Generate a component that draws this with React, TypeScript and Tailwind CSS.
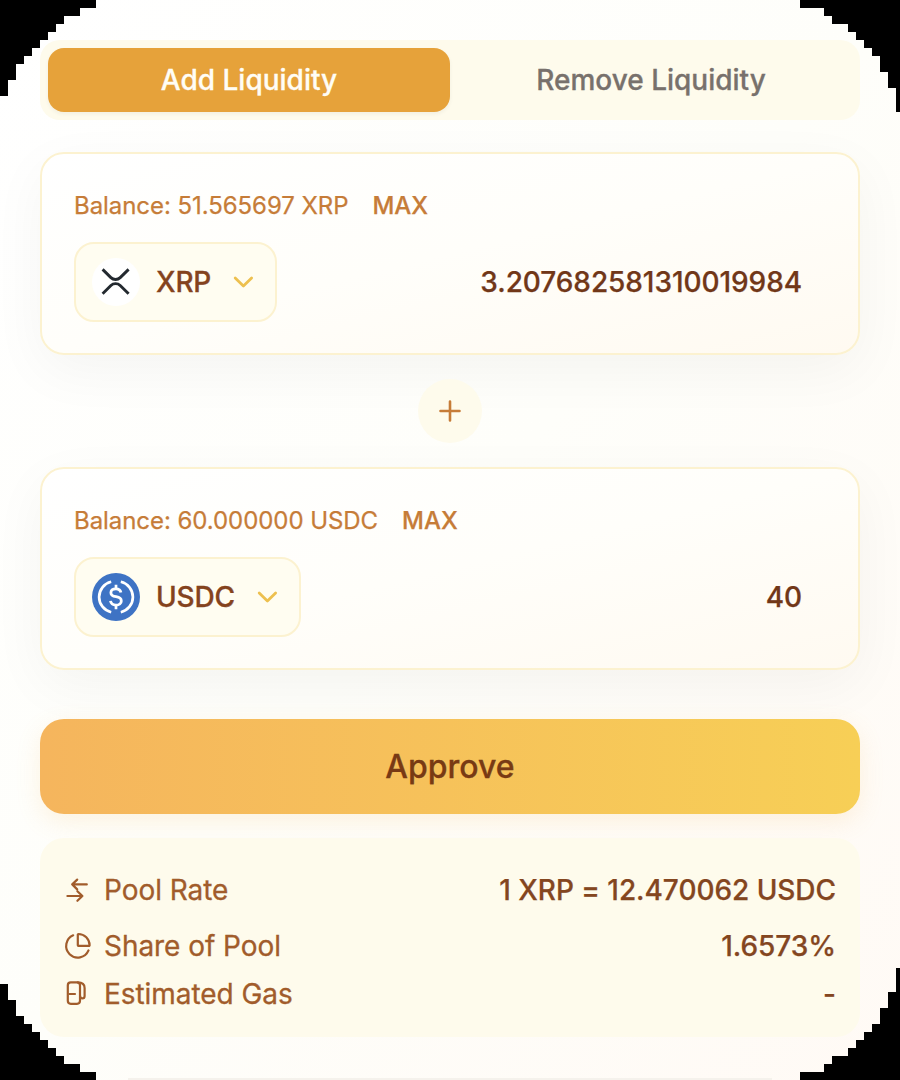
import type { ReactNode } from "react";

function Chevron() {
  return (
    <svg className="h-6 w-6 shrink-0" viewBox="0 0 24 24" fill="none" stroke="#edc04f" strokeWidth="2.8" strokeLinecap="round" strokeLinejoin="round">
      <path d="M4.200 8l8.200 8 8.200-8" />
    </svg>
  );
}

function XrpLogo() {
  return (
    <svg className="h-12 w-12 shrink-0" viewBox="0 0 48 48">
      <circle cx="24" cy="24" r="24" fill="#ffffff" />
      <g fill="none" stroke="#23292f" strokeWidth="2.900">
        <path d="M10.600 11.400l8.300 8.200c2.600 2.500 6.700 2.500 9.300 0l8.400-8.200" />
        <path d="M10.600 35.700l8.300-8.200c2.600-2.500 6.700-2.500 9.300 0l8.400 8.200" />
      </g>
    </svg>
  );
}

function UsdcLogo() {
  return (
    <svg className="h-12 w-12 shrink-0" viewBox="0 0 48 48">
      <circle cx="24" cy="24" r="24" fill="#3e73c4" />
      <g fill="none" stroke="#ffffff" strokeWidth="2.700">
        <path d="M19.200 8.800a15.600 15.600 0 0 0 0 30.400M28.800 8.800a15.600 15.600 0 0 1 0 30.400" />
        <path d="M28.900 19.600c-.4-2.400-2-3.700-4.900-3.700-3.200 0-5.100 1.600-5.100 3.800 0 2.400 1.600 3.400 5.200 4 3.500.6 5.200 1.700 5.200 4.200 0 2.500-2.100 4.200-5.300 4.200-3.100 0-5.100-1.500-5.500-4.200" strokeWidth="2.800" />
        <path d="M24 11.800v4M24 32v4.200" />
      </g>
    </svg>
  );
}

function SwapIcon() {
  return (
    <svg className="h-7 w-7 shrink-0" viewBox="0 0 28 28" fill="none" stroke="#a15c2b" strokeWidth="2.200" strokeLinecap="round" strokeLinejoin="round">
      <path d="M22.800 8.400H8.200M13.200 3.600l-5 4.800 5 5M3.400 20h15M13.400 15.200l5 4.800-5 4.800" />
    </svg>
  );
}

function PieIcon() {
  return (
    <svg className="h-7 w-7 shrink-0" viewBox="0 0 28 28" fill="none" stroke="#a15c2b" strokeWidth="2.200" strokeLinecap="round" strokeLinejoin="round">
      <path d="M9.200 3.300a11.600 11.600 0 1 0 15.300 15.100" />
      <path d="M14.400 2c6.100 0 11.200 5.100 11.200 11.200a.6.600 0 0 1-.6.600H14.400a.6.600 0 0 1-.6-.6V2.600a.6.600 0 0 1 .6-.6z" />
    </svg>
  );
}

function GasIcon() {
  return (
    <svg className="h-7 w-7 shrink-0" viewBox="0 0 28 28" fill="none" stroke="#a15c2b" strokeWidth="2.200" strokeLinecap="round" strokeLinejoin="round">
      <rect x="3.800" y="2.400" width="12.200" height="21.400" rx="3" />
      <path d="M5.500 14h5.500M13.800 2.400c4.500 0 6.800 1.700 6.800 5.600v8c0 1.500-.9 2.400-2.200 2.400s-2.300-.9-2.300-2.400" />
    </svg>
  );
}

interface TokenCardProps {
  balance: string;
  symbol: string;
  amount: string;
  logo: ReactNode;
}

function TokenCard({ balance, symbol, amount, logo }: TokenCardProps) {
  return (
    <section className="h-[203px] rounded-3xl border-2 border-[#fcf2d0] bg-linear-to-br from-white via-[#fffefa] to-[#fffaf1] px-8 pt-9 shadow-[0_16px_56px_rgba(0,0,0,0.045)]">
      <div className="flex h-8 items-center gap-6 text-2xl tracking-[-0.06px] text-[#c67c38]">
        <span className="[-webkit-text-stroke:0.25px]">Balance: {balance} {symbol}</span>
        <button className="font-medium [-webkit-text-stroke:0.25px]">MAX</button>
      </div>
      <div className="mt-5 flex items-center justify-between pr-6">
        <button className="flex h-20 items-center rounded-[20px] border-2 border-[#fcf2d0] bg-[#fffdf1] px-4 pr-5">
          {logo}
          <span className="ml-4 mr-5 text-[28px] font-medium tracking-[-0.2px] text-[#84431e] [-webkit-text-stroke:0.3px]">{symbol}</span>
          <Chevron />
        </button>
        <span className="text-[28px] font-medium tracking-[-0.07px] text-[#713718] [-webkit-text-stroke:0.25px]">{amount}</span>
      </div>
    </section>
  );
}

interface InfoRowProps {
  icon: ReactNode;
  label: string;
  value: string;
}

function InfoRow({ icon, label, value }: InfoRowProps) {
  return (
    <div className="flex h-10 items-center justify-between text-[28px] tracking-[-0.05px]">
      <div className="flex items-center gap-3 text-[#a15c2b]">
        {icon}
        <span className="[-webkit-text-stroke:0.3px]">{label}</span>
      </div>
      <span className="font-medium text-[#84461f] [-webkit-text-stroke:0.25px]">{value}</span>
    </div>
  );
}

export default function App() {
  return (
    <main className="relative h-[1080px] w-[900px] overflow-hidden bg-linear-to-br from-white via-[#fefefa] to-[#fffaf5] px-10 pt-10 font-['Inter',sans-serif] [font-optical-sizing:none]">
      <div className="flex h-20 rounded-[20px] bg-[#fefbec] p-2 text-[28px] font-medium">
        <button className="h-16 flex-1 rounded-2xl bg-[#e6a23a] text-[#fffdf5] shadow-[0_2px_4px_rgba(0,0,0,0.05)] [-webkit-text-stroke:0.3px]">Add Liquidity</button>
        <button className="h-16 flex-1 text-[#78716c] [-webkit-text-stroke:0.3px]">Remove Liquidity</button>
      </div>
      <div className="mt-8">
        <TokenCard balance="51.565697" symbol="XRP" amount="3.207682581310019984" logo={<XrpLogo />} />
      </div>
      <div className="flex h-28 items-center justify-center">
        <div className="relative flex h-16 w-16 items-center justify-center rounded-full bg-[#fefbec]">
          <svg className="h-6 w-6" viewBox="0 0 24 24" fill="none" stroke="#c67c38" strokeWidth="2.600" strokeLinecap="round">
            <path d="M12 2.500v19M2.500 12h19" />
          </svg>
        </div>
      </div>
      <TokenCard balance="60.000000" symbol="USDC" amount="40" logo={<UsdcLogo />} />
      <button className="relative mt-[49px] block h-[95px] w-full rounded-3xl bg-linear-to-r from-[#f5b55d] to-[#f7cf56] text-[32px] font-medium text-[#783a14] shadow-[0_8px_24px_rgba(245,180,90,0.16)] [-webkit-text-stroke:0.3px]">Approve</button>
      <div className="relative mt-6 h-[199px] rounded-3xl bg-[#fefbec] px-6 pt-8">
        <InfoRow icon={<SwapIcon />} label="Pool Rate" value="1 XRP = 12.470062 USDC" />
        <div className="mt-4">
          <InfoRow icon={<PieIcon />} label="Share of Pool" value="1.6573%" />
        </div>
        <div className="mt-2">
          <InfoRow icon={<GasIcon />} label="Estimated Gas" value="-" />
        </div>
      </div>
      <div className="absolute bottom-0 left-32 h-0.5 w-[644px] bg-[#f5f2ec]" />
      <svg className="pointer-events-none absolute left-0 top-0 h-[1080px] w-[900px]" viewBox="0 0 900 1080" fill="#000000" shapeRendering="crispEdges">
        <path d="M0 0H96V8H80V16H64V24H56V32H48V40H40V48H32V56H24V64H16V80H8V96H0z" />
        <path d="M900 0H800V8H824V16H832V24H848V32H856V40H864V48H872V56H880V72H888V88H896V112H900z" />
        <path d="M0 1080H96V1072H80V1064H64V1056H56V1048H48V1040H40V1032H32V1024H24V1016H16V1000H8V984H0z" />
        <path d="M900 1080H800V1072H824V1064H832V1056H848V1048H856V1040H864V1032H872V1024H880V1008H888V992H896V968H900z" />
      </svg>
    </main>
  );
}
